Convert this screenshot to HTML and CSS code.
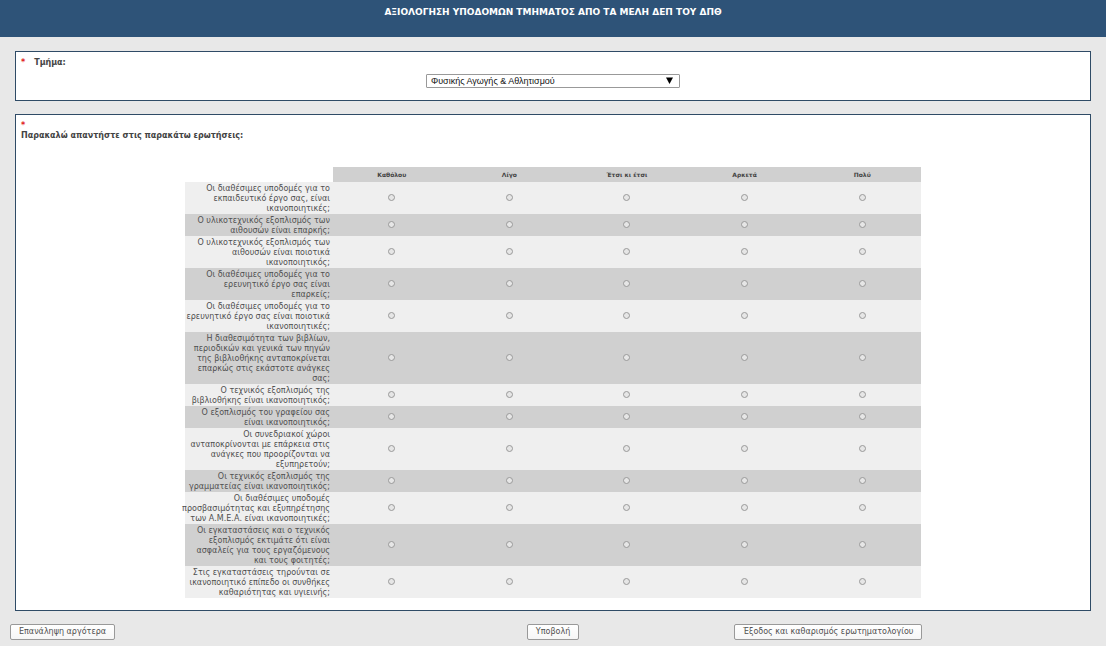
FILE: index.html
```
<!DOCTYPE html>
<html lang="el">
<head>
<meta charset="utf-8">
<title>Αξιολόγηση υποδομών τμήματος</title>
<link rel="stylesheet" href="styles.css">
</head>
<body>
<header class="page-header"><h1 class="page-title">ΑΞΙΟΛΟΓΗΣΗ ΥΠΟΔΟΜΩΝ ΤΜΗΜΑΤΟΣ ΑΠΟ ΤΑ ΜΕΛΗ ΔΕΠ ΤΟΥ ΔΠΘ</h1></header>
<form class="survey">
<section class="card">
  <div class="question inline"><span class="required">*</span><label for="dept">Τμήμα:</label></div>
  <div class="select-row">
    <div class="select-wrap">
      <select id="dept" class="select"><option>Φυσικής Αγωγής &amp; Αθλητισμού</option></select>
      <svg class="arrow" viewBox="0 0 7 7" aria-hidden="true"><path d="M0 0.5H7L3.5 7Z"/></svg>
    </div>
  </div>
</section>
<section class="card matrix-card">
  <div class="question"><span class="required">*</span><h2 class="question-text">Παρακαλώ απαντήστε στις παρακάτω ερωτήσεις:</h2></div>
  <table class="matrix">
    <thead><tr><td class="corner"></td><th scope="col">Καθόλου</th><th scope="col">Λίγο</th><th scope="col">Έτσι κι έτσι</th><th scope="col">Αρκετά</th><th scope="col">Πολύ</th></tr></thead>
    <tbody id="rows"></tbody>
  </table>
</section>
<div class="actions">
  <button type="button" class="btn">Επανάληψη αργότερα</button>
  <button type="submit" class="btn btn-center">Υποβολή</button>
  <button type="button" class="btn">Έξοδος και καθαρισμός ερωτηματολογίου</button>
</div>
</form>
<script src="script.js"></script>
</body>
</html>
```
FILE: styles.css
```
* { box-sizing: border-box; }
body {
  margin: 0;
  background: #e8e8e8;
  color: #444;
  font-family: Verdana, "DejaVu Sans", sans-serif;
  font-size: 8px;
  line-height: 10px;
}
.page-header {
  background: #2e5378;
  padding: 6px 8px 19px;
  text-align: center;
}
.page-title {
  margin: 0;
  color: #fff;
  font-size: 9px;
  line-height: 12px;
  font-weight: bold;
}
.survey { padding: 14px 0 6px; }
.card {
  margin: 0 15px 13px;
  padding: 6px 5px 12px;
  background: #fff;
  border: 1px solid #2f4b66;
}
.question { font-weight: bold; }
.inline { display: flex; gap: 9px; }
.required { display: block; color: #e02020; }
.question-text { margin: 0; font-size: 8px; line-height: 10px; }
.select-row { display: flex; justify-content: center; padding-top: 6px; }
.select-wrap { position: relative; width: 254px; }
.select {
  display: block;
  width: 100%;
  height: 14px;
  padding: 0 16px 0 4px;
  appearance: none;
  background: #fff;
  border: 1px solid #999;
  border-radius: 1px;
  color: #111;
  font: 9px/12px "Liberation Sans", Arial, sans-serif;
}
.arrow {
  position: absolute;
  top: 3px;
  right: 7px;
  width: 7px;
  height: 7px;
  pointer-events: none;
}
.matrix {
  width: 100%;
  max-width: 736px;
  margin: 26px auto 0;
  border-collapse: collapse;
  table-layout: fixed;
}
.matrix th, .matrix td { padding: 0; text-align: center; vertical-align: middle; }
.matrix tbody td { padding-bottom: 2px; }
.matrix .corner { width: 148px; }
.matrix thead th { height: 15px; background: #d0d0d0; font-size: 6px; }
.matrix tbody tr { background: #efefef; }
.matrix tbody tr:nth-child(even) { background: #d0d0d0; }
.matrix tbody th {
  padding: 2px 3px 0 0;
  text-align: right;
  font-weight: normal;
  white-space: pre;
  color: #505050;
}
/* Lines are end-aligned, so a long one grows towards the table's left edge. */
.row-label { display: flex; justify-content: flex-end; }
.radio {
  display: block;
  width: 7px;
  height: 7px;
  margin: 0 auto;
  appearance: none;
  background: #e6e6e6;
  border: 1px solid #999;
  border-radius: 50%;
}
.radio:checked { background: #444; }
.actions {
  display: grid;
  grid-template-columns: repeat(3, 1fr);
  justify-items: start;
  padding: 0 10px;
}
.btn {
  height: 16px;
  padding: 0 8px;
  background: linear-gradient(#fff, #f6f6f6);
  border: 1px solid #999;
  border-radius: 2px;
  color: #505050;
  font: inherit;
  white-space: nowrap;
}
.btn-center { justify-self: center; }
```
FILE: script.js
```
const options = ["Καθόλου", "Λίγο", "Έτσι κι έτσι", "Αρκετά", "Πολύ"];
const questions = [
  "Οι διαθέσιμες υποδομές για το\nεκπαιδευτικό έργο σας, είναι\nικανοποιητικές;",
  "Ο υλικοτεχνικός εξοπλισμός των\nαιθουσών είναι επαρκής;",
  "Ο υλικοτεχνικός εξοπλισμός των\nαιθουσών είναι ποιοτικά\nικανοποιητικός;",
  "Οι διαθέσιμες υποδομές για το\nερευνητικό έργο σας είναι\nεπαρκείς;",
  "Οι διαθέσιμες υποδομές για το\nερευνητικό έργο σας είναι ποιοτικά\nικανοποιητικές;",
  "Η διαθεσιμότητα των βιβλίων,\nπεριοδικών και γενικά των πηγών\nτης βιβλιοθήκης ανταποκρίνεται\nεπαρκώς στις εκάστοτε ανάγκες\nσας;",
  "Ο τεχνικός εξοπλισμός της\nβιβλιοθήκης είναι ικανοποιητικός;",
  "Ο εξοπλισμός του γραφείου σας\nείναι ικανοποιητικός;",
  "Οι συνεδριακοί χώροι\nανταποκρίνονται με επάρκεια στις\nανάγκες που προορίζονται να\nεξυπηρετούν;",
  "Οι τεχνικός εξοπλισμός της\nγραμματείας είναι ικανοποιητικός;",
  "Οι διαθέσιμες υποδομές\nπροσβασιμότητας και εξυπηρέτησης\nτων Α.Μ.Ε.Α. είναι ικανοποιητικές;",
  "Οι εγκαταστάσεις και ο τεχνικός\nεξοπλισμός εκτιμάτε ότι είναι\nασφαλείς για τους εργαζόμενους\nκαι τους φοιτητές;",
  "Στις εγκαταστάσεις τηρούνται σε\nικανοποιητικό επίπεδο οι συνθήκες\nκαθαριότητας και υγιεινής;"
];
const body = document.getElementById("rows");
questions.forEach((text, i) => {
  const row = body.insertRow();
  const head = document.createElement("th");
  head.scope = "row";
  const label = document.createElement("span");
  label.className = "row-label";
  label.textContent = text;
  head.append(label);
  row.append(head);
  options.forEach((option) => {
    const input = document.createElement("input");
    input.type = "radio";
    input.className = "radio";
    input.name = "q" + (i + 1);
    input.value = option;
    input.setAttribute("aria-label", text.replace(/\n/g, " ") + " " + option);
    row.insertCell().append(input);
  });
});
```
